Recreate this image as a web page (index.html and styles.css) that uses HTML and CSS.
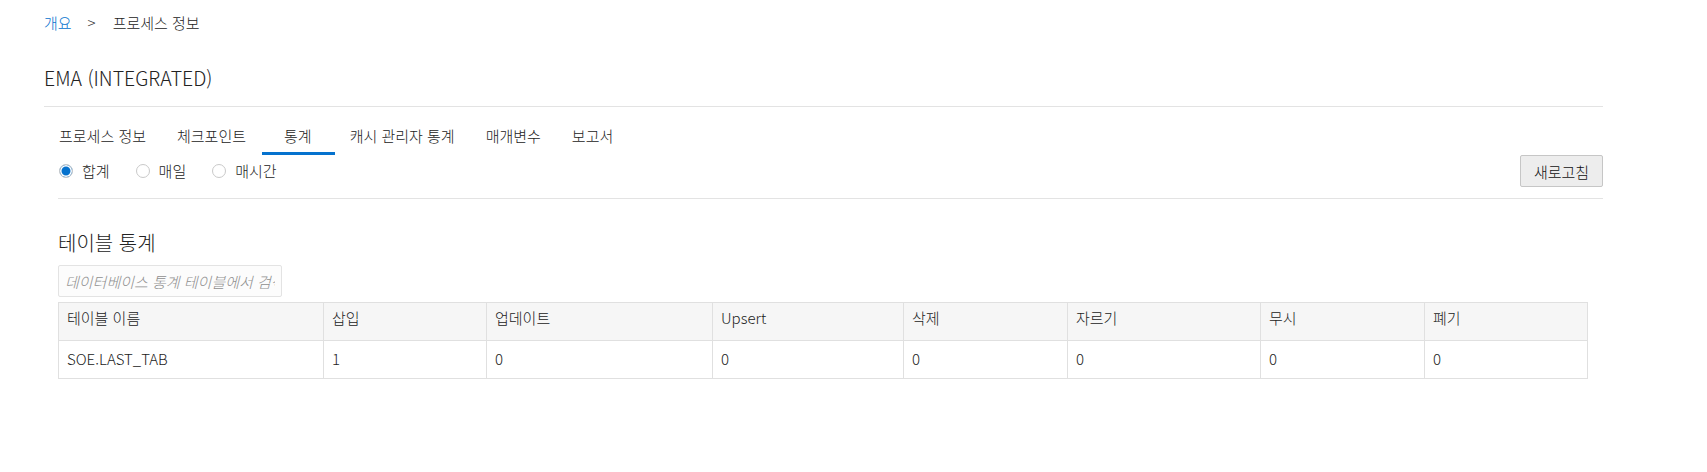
FILE: index.html
```html
<!DOCTYPE html>
<html lang="ko">
<head>
<meta charset="utf-8">
<title>프로세스 정보</title>
<link rel="stylesheet" href="styles.css">
</head>
<body>
<div class="page">
  <nav class="crumbs">
    <a class="crumb-link" href="#">개요</a>
    <span class="crumb-sep">&gt;</span>
    <span class="crumb-current">프로세스 정보</span>
  </nav>
  <h1 class="title">EMA (INTEGRATED)</h1>
  <div class="tabs">
    <div class="tab">프로세스 정보</div>
    <div class="tab">체크포인트</div>
    <div class="tab tab-active">통계</div>
    <div class="tab">캐시 관리자 통계</div>
    <div class="tab">매개변수</div>
    <div class="tab">보고서</div>
  </div>
  <div class="panel">
    <div class="toolbar">
      <div class="radios">
        <label class="radio"><input type="radio" name="period" checked><span>합계</span></label>
        <label class="radio"><input type="radio" name="period"><span>매일</span></label>
        <label class="radio"><input type="radio" name="period"><span>매시간</span></label>
      </div>
      <button class="btn" type="button">새로고침</button>
    </div>
    <h2 class="section-title">테이블 통계</h2>
    <input class="search" type="text" placeholder="데이터베이스 통계 테이블에서 검색">
    <table class="grid">
      <colgroup>
        <col class="c1"><col class="c2"><col class="c3"><col class="c4"><col class="c5"><col class="c6"><col class="c7"><col class="c8">
      </colgroup>
      <thead>
        <tr><th>테이블 이름</th><th>삽입</th><th>업데이트</th><th>Upsert</th><th>삭제</th><th>자르기</th><th>무시</th><th>폐기</th></tr>
      </thead>
      <tbody>
        <tr><td>SOE.LAST_TAB</td><td>1</td><td>0</td><td>0</td><td>0</td><td>0</td><td>0</td><td>0</td></tr>
      </tbody>
    </table>
  </div>
</div>
</body>
</html>
```
FILE: styles.css
```css
* { box-sizing: border-box; }
html, body { margin: 0; padding: 0; background: #fff; }
body {
  font-family: "Noto Sans CJK KR", "Noto Sans", sans-serif;
  font-size: 15px;
  line-height: 20px;
  font-weight: 300;
  color: #222;
}
.page {
  margin-left: 44px;
  width: 1559px;
}
.crumbs {
  display: flex;
  align-items: center;
  padding-top: 12px;
  height: 33px;
}
.crumb-link { color: #0572ce; text-decoration: none; }
.crumb-sep { margin: 0 17px 0 16px; color: #333; }
.crumb-current { color: #222; }
.title {
  margin: 31px 0 0;
  font-size: 19.5px;
  line-height: 28px;
  font-weight: 300;
  color: #222;
  padding-bottom: 14px;
  border-bottom: 1px solid #e3e3e3;
}
.tabs {
  display: flex;
}
.tab {
  padding: 19px 16px 6px 15px;
  border-bottom: 3px solid transparent;
  white-space: nowrap;
  color: #222;
}
.tab-active {
  padding-left: 22px;
  padding-right: 23px;
  border-bottom-color: #0572ce;
}
.panel {
  margin-left: 14px;
  width: 1545px;
}
.toolbar {
  display: flex;
  justify-content: space-between;
  align-items: center;
  padding-bottom: 11px;
  border-bottom: 1px solid #e3e3e3;
}
.radios {
  display: flex;
  align-items: center;
  padding-left: 1px;
}
.radio {
  display: flex;
  align-items: center;
  margin-right: 26px;
}
.radio input {
  appearance: none;
  -webkit-appearance: none;
  width: 14px;
  height: 14px;
  margin: 0 9px 0 0;
  border: 1px solid #c9c9c9;
  border-radius: 50%;
  background: #fff;
}
.radio input:checked {
  background: #0572ce;
  box-shadow: inset 0 0 0 1.5px #fff;
}
.btn {
  width: 83px;
  height: 32px;
  border: 1px solid #c6c6c6;
  border-radius: 2px;
  background: #ededed;
  font-family: inherit;
  font-size: 15px;
  font-weight: 300;
  color: #111;
  padding: 0;
}
.section-title {
  margin: 30px 0 0;
  font-size: 20px;
  line-height: 28px;
  font-weight: 300;
  color: #222;
}
.search {
  display: block;
  margin-top: 8px;
  width: 224px;
  height: 32px;
  border: 1px solid #e3e3e3;
  border-radius: 2px;
  background: #fcfcfc;
  padding: 0 6px;
  font-family: inherit;
  font-size: 15px;
  font-weight: 300;
  color: #333;
}
.search::placeholder { color: #8f8f8f; font-style: italic; }
.grid {
  margin-top: 5px;
  width: 1529px;
  table-layout: fixed;
  border-collapse: collapse;
}
.grid th, .grid td {
  border: 1px solid #e0e0e0;
  text-align: left;
  font-weight: 300;
  padding: 8px 8px 9px;
  white-space: nowrap;
  overflow: hidden;
  color: #222;
}
.grid th {
  background: #f6f6f6;
  padding: 5px 8px 12px;
}
.c1 { width: 265px; }
.c2 { width: 163px; }
.c3 { width: 226px; }
.c4 { width: 191px; }
.c5 { width: 164px; }
.c6 { width: 193px; }
.c7 { width: 164px; }
.c8 { width: 163px; }
```
